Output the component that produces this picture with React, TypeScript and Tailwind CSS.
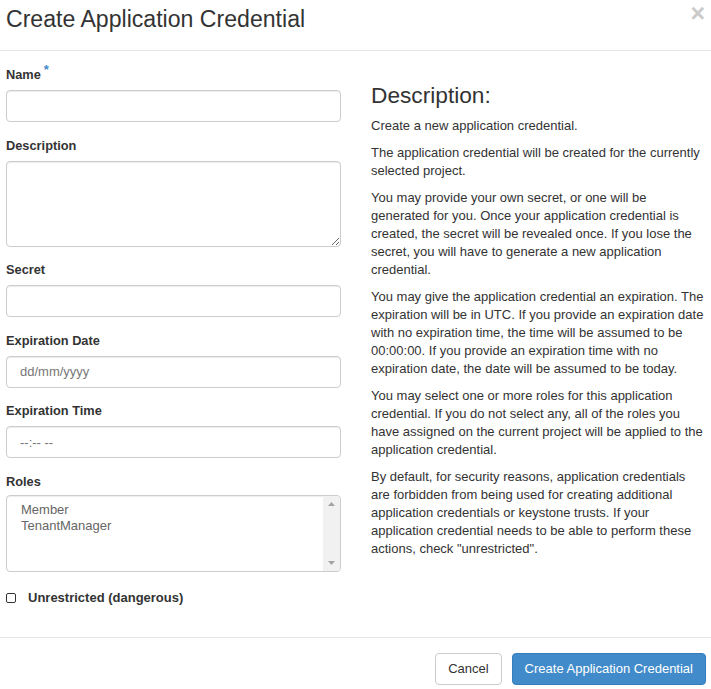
import React from 'react';

const inputCls =
  'block h-[32px] w-full rounded-[4px] border border-[#ccc] bg-white px-[13px] text-[13px] text-[#555] shadow-[inset_0_1px_1px_rgba(0,0,0,0.075)] outline-none placeholder:text-[#777]';

const Field: React.FC<{ label: string; required?: boolean; children: React.ReactNode }> = ({
  label,
  required,
  children,
}) => (
  <div className="mb-[14.5px]">
    <label className="mb-[6px] block text-[12.8px] font-bold leading-[18px] text-[#333]">
      {label}
      {required && <span className="relative -top-[5px] ml-[3px] text-[13px] font-bold text-[#428bca]">*</span>}
    </label>
    {children}
  </div>
);

// line breaks as in the dialog
const paragraphs = [
  ['Create a new application credential.'],
  ['The application credential will be created for the currently', 'selected project.'],
  [
    'You may provide your own secret, or one will be',
    'generated for you. Once your application credential is',
    'created, the secret will be revealed once. If you lose the',
    'secret, you will have to generate a new application',
    'credential.',
  ],
  [
    'You may give the application credential an expiration. The',
    'expiration will be in UTC. If you provide an expiration date',
    'with no expiration time, the time will be assumed to be',
    '00:00:00. If you provide an expiration time with no',
    'expiration date, the date will be assumed to be today.',
  ],
  [
    'You may select one or more roles for this application',
    'credential. If you do not select any, all of the roles you',
    'have assigned on the current project will be applied to the',
    'application credential.',
  ],
  [
    'By default, for security reasons, application credentials',
    'are forbidden from being used for creating additional',
    'application credentials or keystone trusts. If your',
    'application credential needs to be able to perform these',
    'actions, check "unrestricted".',
  ],
];

export default function App() {
  return (
    <div className="h-[689px] w-[711px] overflow-hidden bg-white font-['Liberation_Sans',Arial,sans-serif] text-[#333]">
      {/* header */}
      <div className="flex h-[51px] items-start justify-between border-b border-[#e5e5e5] pl-[6px] pr-[6px] pt-[7px]">
        <h3 className="text-[23.1px] leading-[25px] text-[#333]">Create Application Credential</h3>
        <span className="-mt-[6px] text-[25px] font-bold leading-[25px] text-[#cbcbcb]">×</span>
      </div>

      {/* body */}
      <div className="flex h-[586px]">
        <div className="ml-[6px] w-[335px] shrink-0 pt-[15px]">
          <Field label="Name" required>
            <input className={inputCls} />
          </Field>
          <Field label="Description">
            <textarea className="block h-[86px] w-full resize-y rounded-[4px] border border-[#ccc] bg-white px-[13px] py-[6px] text-[13px] shadow-[inset_0_1px_1px_rgba(0,0,0,0.075)] outline-none" />
          </Field>
          <Field label="Secret">
            <input className={inputCls} />
          </Field>
          <Field label="Expiration Date">
            <input className={inputCls} placeholder="dd/mm/yyyy" />
          </Field>
          <Field label="Expiration Time">
            <input className={inputCls} placeholder="--:-- --" />
          </Field>
          <Field label="Roles">
            <div className="-mt-[2px] flex h-[77px] overflow-hidden rounded-[4px] border border-[#ccc] bg-white shadow-[inset_0_1px_1px_rgba(0,0,0,0.075)]">
              <div className="flex-1 pl-[14px] pt-[6px] text-[13px] leading-[16px] text-[#666]">
                <div>Member</div>
                <div>TenantManager</div>
              </div>
              <div className="flex w-[17px] flex-col items-center justify-between bg-[#f1f1f1] py-[6px]">
                <svg width="7" height="4" viewBox="0 0 7 4">
                  <path d="M0 4 L3.5 0 L7 4 Z" fill="#a3a3a3" />
                </svg>
                <svg width="7" height="4" viewBox="0 0 7 4">
                  <path d="M0 0 L3.5 4 L7 0 Z" fill="#a3a3a3" />
                </svg>
              </div>
            </div>
          </Field>
          <div className="flex items-center pt-[3px]">
            <span className="block h-[10px] w-[10px] rounded-[2px] border border-[#333]" />
            <span className="ml-[12px] text-[13px] font-bold leading-[18px] text-[#333]">
              Unrestricted (dangerous)
            </span>
          </div>
        </div>

        <div className="ml-[30px] w-[340px] shrink-0 pt-[32px]">
          <h3 className="mb-[9px] text-[22.7px] leading-[25px] text-[#333]">Description:</h3>
          {paragraphs.map((lines, i) => (
            <p key={i} className="mb-[9px] text-[13px] leading-[18px] text-[#333]">
              {lines.map((l, j) => (
                <span key={j} className="block whitespace-nowrap">
                  {l}
                </span>
              ))}
            </p>
          ))}
        </div>
      </div>

      {/* footer */}
      <div className="flex justify-end gap-[10px] border-t border-[#e5e5e5] pr-[5px] pt-[15px]">
        <button className="h-[32px] rounded-[4px] border border-[#ccc] bg-white px-[12px] text-[13px] text-[#333]">
          Cancel
        </button>
        <button className="h-[32px] rounded-[4px] border border-[#357ebd] bg-[#428bca] px-[12px] text-[13px] text-white">
          Create Application Credential
        </button>
      </div>
    </div>
  );
}
